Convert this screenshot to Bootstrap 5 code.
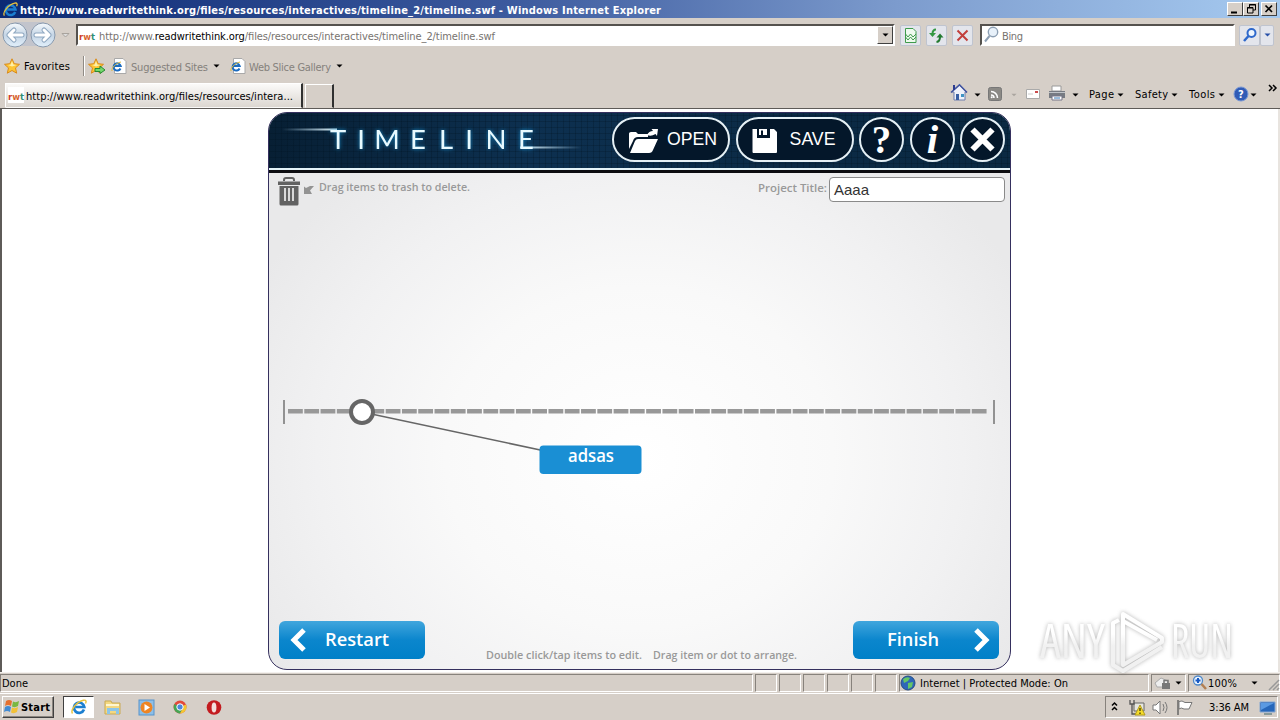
<!DOCTYPE html>
<html lang="en">

<head>
    <meta charset="UTF-8">
    <meta name="viewport" content="width=device-width, initial-scale=1.0">
    <title>Timeline</title>
    <link href="https://cdn.jsdelivr.net/npm/bootstrap@5.3.3/dist/css/bootstrap.min.css" rel="stylesheet">
    <style>
        body {
            width: 1280px;
            height: 720px;
            overflow: hidden;
            background: #d6cfc8;
            color: #000;
            font: 11px/14px "DejaVu Sans Condensed", "DejaVu Sans", sans-serif;
            font-stretch: condensed;
        }
        svg { display: block; flex: none; overflow: visible; }
        svg text { white-space: pre; }

        /* title bar */
        .titlebar {
            height: 18px;
            padding: 0 3px 0 3px;
            background: linear-gradient(90deg, #0c2a74, #3c5a9e 40%, #7c9bcd 70%, #a6caf0);
        }
        .win-btn { width: 16px; height: 14px; background: #d6cfc8; border: 1px solid; border-color: #fff #404040 #404040 #fff; }
        .win-close { margin-left: 2px; }

        /* address row */
        .address-row { height: 34px; padding-left: 2px; }
        .sunken { background: #fff; border: 2px solid; border-color: #55524e #fff #fff #55524e; outline: 0; }
        .address-box { width: 819px; height: 22px; margin-left: 6px; }
        .drop-btn { width: 16px; height: 18px; background: #d6cfc8; border: 1px solid; border-color: #fff #404040 #404040 #fff; }
        .tool-btn { width: 21px; height: 21px; background: #e3e5ec; border: 1px solid #bfc4cf; border-radius: 2px; }
        .search-box { width: 255px; height: 22px; margin-left: 7px; }

        /* favorites and tabs */
        .fav-row { height: 28px; padding-left: 4px; }
        .vline { width: 2px; height: 20px; background: #908b85; border-right: 1px solid #fff; }
        .tab-row { height: 29px; border-bottom: 1px solid #5e5b58; padding-left: 5px; }
        .tab-on { width: 298px; height: 25px; background: linear-gradient(#fbfaf9, #dcd7d1); border: 1px solid; border-color: #fff #303030 transparent #fff; border-right-width: 2px; padding-left: 2px; }
        .tab-new { width: 29px; height: 24px; margin-left: 2px; border: 1px solid; border-color: #fff #303030 transparent #fff; border-right-width: 2px; }
        .cmds { width: 329px; height: 24px; }

        /* page area */
        .page { height: 563px; background: #fff; border-left: 2px solid #5e5b58; border-right: 2px solid #e8e4df; padding-top: 3px; }
        .app {
            width: 743px;
            height: 558px;
            margin-left: 266px;
            border: 1.5px solid #35305e;
            border-radius: 19px;
            overflow: hidden;
            font-stretch: normal;
            background: radial-gradient(ellipse 430px 380px at 50% 62%, #fff 0, #f9f9f9 45%, #f1f1f2 75%, #e9e9ea 100%);
        }
        .app-head {
            height: 60px;
            background:
                repeating-linear-gradient(0deg, rgba(0, 18, 32, .25) 0 1px, transparent 1px 6px),
                repeating-linear-gradient(90deg, rgba(0, 18, 32, .25) 0 1px, transparent 1px 6px),
                linear-gradient(90deg, #071f34, #0d3050 35%, #0b2a45 70%, #0a2942);
            border-bottom: 3px solid #0c0c10;
            box-shadow: inset 0 -2px #e4f3f8;
        }
        .pill { height: 45px; border: 2px solid #e5f0f5; border-radius: 23px; background: #04172a; color: #fff; font: 17.7px "Liberation Sans", sans-serif; }
        .round { width: 45px; }
        .hint { font: 600 10.5px/14px "Open Sans", sans-serif; white-space: pre; }
        .title-input { width: 176px; height: 25px; border: 1.5px solid #8a8a8a; border-radius: 4px; background: #fff; padding: 0 4px; color: #333; font: 15px/24px "Liberation Sans", sans-serif; }
        .nav-btn { width: 146px; height: 38px; border: 0; border-radius: 6px; color: #fff; background: linear-gradient(#41a6dd, #0b86cd 50%, #0080c8); font: 600 18.5px "Open Sans", sans-serif; }

        /* status bar and taskbar */
        .status { height: 21px; border-top: 1px solid #f4f1ee; padding-top: 1px; }
        .panel { height: 18px; border: 1px solid; border-color: #87827c #fff #fff #87827c; margin-right: 2px; }
        .slot { width: 22px; }
        .taskbar { height: 27px; border-top: 1px solid #fff; padding: 2px 2px 0; }
        .start { width: 52px; height: 22px; border: 1px solid; border-color: #fff #404040 #404040 #fff; box-shadow: inset -1px -1px #8b8680; font-weight: bold; }
        .task-on { width: 31px; height: 22px; background: #fff; border: 1px solid; border-color: #404040 #fff #fff #404040; margin-left: 9px; }
        .tray { width: 173px; height: 22px; border: 1px solid; border-color: #87827c #fff #fff #87827c; }
        .anyrun { left: 1036px; top: 606px; filter: drop-shadow(0 0 2px rgba(70, 70, 70, .4)); }
    </style>
</head>

<body class="d-flex flex-column">
    <!-- shared icons -->
    <svg width="0" height="0" class="position-absolute">
        <defs>
            <linearGradient id="orb" x1="0" y1="0" x2="0" y2="1">
                <stop offset="0" stop-color="#f6fafd"/><stop offset=".5" stop-color="#c5d5e5"/><stop offset="1" stop-color="#e2f0fb"/>
            </linearGradient>
            <linearGradient id="streak1"><stop offset="0" stop-color="#bfe6ff" stop-opacity="0"/><stop offset="1" stop-color="#e8faff"/></linearGradient>
            <linearGradient id="streak2"><stop offset="0" stop-color="#e8faff"/><stop offset="1" stop-color="#bfe6ff" stop-opacity="0"/></linearGradient>
            <linearGradient id="fade" gradientUnits="userSpaceOnUse" x1="0" y1="28" x2="0" y2="40"><stop offset="0" stop-color="#fff"/><stop offset="1" stop-color="#f1f1f1"/></linearGradient>
            <symbol id="ie" viewBox="0 0 16 16">
                <path d="M13 10.6A5.2 5.2 0 1 1 13.3 8H4.5" fill="none" stroke="#1c7fd0" stroke-width="2.7"/>
                <path d="M1.5 14.5C-1 11 6 2.500 12.500 1.200C15.500.600 15.400 2.800 14.500 4.500" fill="none" stroke="#e8c23c" stroke-width="1.400"/>
            </symbol>
            <symbol id="iepage" viewBox="0 0 16 16">
                <path d="M3.500.5H12l3 3V15.500H3.500Z" fill="#fff" stroke="#a9a9a9"/>
                <path d="M9.500 10.500A3.600 3.600 0 1 1 9.700 8H3.500" fill="none" stroke="#1c6cc0" stroke-width="2"/>
                <path d="M1 13C0 10 5 5 10 4" fill="none" stroke="#dcb83a"/>
            </symbol>
            <symbol id="star" viewBox="0 0 16 16">
                <path d="M8 .8L10.200 5.700L15.500 6.300L11.500 9.900L12.700 15.200L8 12.500L3.300 15.200L4.500 9.900L.5 6.300L5.800 5.700Z" fill="#fdc533" stroke="#d98a1c"/>
                <path d="M8 3L9.300 6.600L12.500 7L8 8.500L4 7L6.700 6.500Z" fill="#fff0a8"/>
            </symbol>
            <symbol id="down" viewBox="0 0 7 4"><path d="M.5 .5H6.500L3.500 3.500Z"/></symbol>
        </defs>
    </svg>

    <div class="titlebar d-flex align-items-center text-white">
        <svg width="15" height="15"><use href="#ie"/></svg>
        <svg width="642" height="16" class="ms-1 me-auto"><text x="-2" y="12.500" fill="#fff" font-weight="bold" textLength="641" lengthAdjust="spacing">http://www.readwritethink.org/files/resources/interactives/timeline_2/timeline.swf - Windows Internet Explorer</text></svg>
        <div class="win-btn"><svg width="14" height="12"><path d="M3 9.500h6" stroke="#000" stroke-width="2"/></svg></div>
        <div class="win-btn"><svg width="14" height="12"><path d="M5.500 4V1.500H11.500V7H9M5 2h7M3.500 4.500H9V10H3.500ZM3 5h6" fill="none" stroke="#000"/></svg></div>
        <div class="win-btn win-close"><svg width="14" height="12"><path d="M3.500 2.500L10 9M10 2.500L3.500 9" stroke="#000" stroke-width="1.700"/></svg></div>
    </div>

    <div class="address-row d-flex align-items-center">
        <svg width="68" height="28">
            <path d="M13 1H42V25H13Z" fill="#c2c4cc"/>
            <g fill="url(#orb)" stroke="#8899ad"><circle cx="13" cy="14" r="12"/><circle cx="41" cy="14" r="12"/></g>
            <g fill="none" stroke-linecap="round" stroke-linejoin="round" stroke="#8ea7c0" stroke-width="5"><path d="M20 14H7M12 9L7 14L12 19"/><path d="M34 14H47M42 9L47 14L42 19"/></g>
            <g fill="none" stroke-linecap="round" stroke-linejoin="round" stroke="#fff" stroke-width="3"><path d="M20 14H7M12 9L7 14L12 19"/><path d="M34 14H47M42 9L47 14L42 19"/></g>
            <path d="M60 12.500h7l-3.500 3.500z" fill="#ddd" stroke="#a8a39d"/>
        </svg>
        <div class="address-box sunken d-flex align-items-center justify-content-between">
            <svg width="430" height="18">
                <text x="1" y="13.500" font-size="9" font-weight="bold" fill="#d03b2e" textLength="16" lengthAdjust="spacingAndGlyphs">r<tspan fill="#d8642f">w</tspan><tspan fill="#2f8e76">t</tspan></text>
                <text x="21" y="14" fill="#77736f" textLength="396" lengthAdjust="spacing">http://www.<tspan fill="#000">readwritethink.org</tspan>/files/resources/interactives/timeline_2/timeline.swf</text>
            </svg>
            <div class="drop-btn d-flex align-items-center justify-content-center"><svg width="7" height="4"><use href="#down"/></svg></div>
        </div>
        <div class="d-flex" style="gap: 5px; margin-left: 5px">
            <div class="tool-btn"><svg width="19" height="19"><path d="M4.500 2.500H12L15 5.500V16.500H4.500Z" fill="#eefaee" stroke="#3f9b4c"/><path d="M4.500 8L7 11L9.500 8L12 11L15 8M4.500 11L7 14L9.500 11L12 14L15 11" stroke="#3f9b4c" fill="none"/></svg></div>
            <div class="tool-btn"><svg width="19" height="19"><path d="M9 3.500Q5.500 3.500 5.500 8" fill="none" stroke="#349842" stroke-width="2"/><path d="M2 7H9L5.500 11Z" fill="#349842"/><path d="M9.500 16Q13 15.500 13 11" fill="none" stroke="#237a30" stroke-width="2"/><path d="M9.500 11.500H16.500L13 7.500Z" fill="#237a30"/></svg></div>
            <div class="tool-btn"><svg width="19" height="19"><path d="M4.500 4.500L14.500 14.500M14.500 4.500L4.500 14.500" stroke="#c23f3c" stroke-width="2"/></svg></div>
        </div>
        <div class="search-box sunken">
            <svg width="200" height="18"><circle cx="11" cy="6" r="4.700" fill="#e8f1fa" stroke="#8d9fb3" stroke-width="1.400"/><path d="M7.500 10L3 15.500" stroke="#8d9fb3" stroke-width="2"/><text x="20" y="14" fill="#77736f" textLength="21">Bing</text></svg>
        </div>
        <div class="tool-btn ms-1"><svg width="19" height="19"><circle cx="11.500" cy="7" r="4" fill="#edf5fe" stroke="#2e68cb" stroke-width="2"/><path d="M8.500 10L4 15" stroke="#2e68cb" stroke-width="2.500"/></svg></div>
        <div class="tool-btn d-flex align-items-center justify-content-center" style="width: 14px"><svg width="7" height="4" fill="#2850a8"><use href="#down"/></svg></div>
    </div>

    <div class="fav-row d-flex align-items-center">
        <svg width="16" height="16"><use href="#star" width="16"/></svg>
        <svg width="59" height="16"><text x="4" y="12" textLength="46">Favorites</text></svg>
        <div class="vline ms-1"></div>
        <svg width="22" height="16" class="ms-1"><use href="#star" x="-1" width="16"/><path d="M6 10.500H11V8L16 12L11 15.500V13.500H6Z" fill="#75d86c" stroke="#278a32"/></svg>
        <svg width="16" height="16"><use href="#iepage" width="16"/></svg>
        <svg width="103" height="16"><text x="4" y="13" fill="#85817c" textLength="77">Suggested Sites</text><use href="#down" x="86" y="6" width="7" height="4"/></svg>
        <svg width="16" height="16"><use href="#iepage" width="16"/></svg>
        <svg width="110" height="16"><text x="3" y="13" fill="#85817c" textLength="82">Web Slice Gallery</text><use href="#down" x="90" y="6" width="7" height="4"/></svg>
    </div>

    <div class="tab-row d-flex align-items-end">
        <div class="tab-on d-flex align-items-center">
            <svg width="292" height="17"><path d="M0 0h16v16H0z" fill="#fff"/>
                <text x="0" y="13" font-size="9" font-weight="bold" fill="#d03b2e" textLength="16" lengthAdjust="spacingAndGlyphs">r<tspan fill="#d8642f">w</tspan><tspan fill="#2f8e76">t</tspan></text>
                <text x="18" y="13" textLength="267" lengthAdjust="spacing">http://www.readwritethink.org/files/resources/intera...</text></svg>
        </div>
        <div class="tab-new me-auto"></div>
        <svg class="cmds">
            <path d="M1 8L8 1L16 8H14V16H3V8Z" fill="#eef1fa" stroke="#6f7fae"/><path d="M0 8.500L8.500 .8L16 8.500" fill="none" stroke="#4154a0" stroke-width="1.600"/><path d="M3 1v5" stroke="#2c3c90" stroke-width="2"/><path d="M5 10h3v6H5z" fill="#385fa3"/><path d="M10 10h3v3h-3z" fill="#3f94c4"/>
            <g transform="translate(0 1)">
            <use href="#down" x="23" y="8" width="7" height="4"/>
            <rect x="37.500" y="2.500" width="13" height="13" rx="2" fill="#8b8985" stroke="#777"/><path d="M40 6.500A6.500 6.500 0 0 1 46.500 13M40 10A3 3 0 0 1 43 13" fill="none" stroke="#fff" stroke-width="1.500"/><circle cx="40.700" cy="12.300" r="1" fill="#fff"/>
            <use href="#down" x="60" y="8" width="6" height="4" fill="#aaa59f"/>
            <path d="M75.500 4.500h13v9h-13z" fill="#fff" stroke="#aaa"/><path d="M84 6h3v2h-3z" fill="#cc4c4c"/><path d="M77 9h5" stroke="#ccc"/>
            <path d="M101 1h9v5h-9z" fill="#fff" stroke="#999"/><path d="M98 6h16v7H98z" fill="#777b82"/><path d="M98 7.500h16" stroke="#c0c4c8"/><path d="M101 11h10v4h-10z" fill="#fff" stroke="#778"/><path d="M103 13h6" stroke="#3778b5"/>
            <use href="#down" x="121" y="8" width="7" height="4"/>
            <text x="138" y="13" textLength="25">Page</text><use href="#down" x="166" y="8" width="7" height="4"/>
            <text x="184" y="13" textLength="33">Safety</text><use href="#down" x="220" y="8" width="7" height="4"/>
            <text x="238" y="13" textLength="26">Tools</text><use href="#down" x="267" y="8" width="7" height="4"/>
            <circle cx="290" cy="9" r="7" fill="#315cb6" stroke="#7998d5"/><text x="287" y="13" font-weight="bold" fill="#fff">?</text>
            <use href="#down" x="299" y="8" width="7" height="4"/>
            <path d="M318 0L321 3L318 6M322 0L325 3L322 6" fill="none" stroke="#000" stroke-width="1.500"/>
            </g>
        </svg>
    </div>

    <main class="page">
        <div class="app d-flex flex-column">
            <div class="app-head d-flex flex-none">
                <svg width="343" height="54">
                    <path d="M13 15.500H68V17.500H13Z" fill="url(#streak1)"/>
                    <path d="M251 33.500H313V35.500H251Z" fill="url(#streak2)"/>
                    <g font-family="Lato, sans-serif" font-size="27.500" text-anchor="middle" fill="#e8faff" style="filter: drop-shadow(0 0 2px #1689c7)"><text x="69 92 118 149 177 200 227 257" y="36">TIMELINE</text></g>
                </svg>
                <div class="d-flex pt-1" style="gap: 5.600px">
                    <button class="pill d-flex align-items-center p-0" style="width: 118px; gap: 7px"><svg width="46" height="38"><path d="M15 28V12.500Q15 11 17 11H22L24 13H34V16H24Q20 16 19 20Z" fill="#fff"/><path d="M16 32L21 20Q22 18 24 18H44L39 29Q38 32 35 32Z" fill="#fff"/><path d="M33 14Q35 10 39 10L37.500 8L44 8L43 15L41.500 13Q37 16 33 14Z" fill="#fff"/></svg><span>OPEN</span></button>
                    <button class="pill d-flex align-items-center p-0" style="width: 118px; gap: 13px"><svg width="39" height="38"><path d="M14.500 8H19V17H32V8H36L39 11V31Q39 32 38 32H15.500Q14.500 32 14.500 31ZM21 8H29V14H25V9.500H23V14H21Z" fill="#fff"/></svg><span>SAVE</span></button>
                    <button class="pill round p-0"><svg width="41" height="41"><text x="20.500" y="33.500" text-anchor="middle" font-family="Liberation Serif, serif" font-weight="bold" font-size="39" fill="#fff">?</text></svg></button>
                    <button class="pill round p-0"><svg width="41" height="41"><text x="20.500" y="33.500" text-anchor="middle" font-family="Liberation Serif, serif" font-weight="bold" font-style="italic" font-size="41" fill="#fff">i</text></svg></button>
                    <button class="pill round p-0"><svg width="41" height="41"><path d="M10.500 10.500L30.500 30.500M30.500 10.500L10.500 30.500" stroke="#fff" stroke-width="6"/></svg></button>
                </div>
            </div>

            <div class="d-flex align-items-start" style="padding: 3.500px 5px 0 8px">
                <svg width="42" height="32"><path d="M7 4V3Q7 1 9 1H15Q17 1 17 3V4" fill="none" stroke="#626262" stroke-width="2"/><path d="M1 4.500H23V8H1ZM2.500 9H21.500V27Q21.500 28.500 20 28.500H4Q2.500 28.500 2.500 27Z" fill="#626262"/><path d="M8 11V24M12 11V24M16 11V24" stroke="#eee" stroke-width="1.700"/><path d="M27 17V9.500L29 11L33 9H37L33 13.500L35 17Z" fill="#939393"/></svg>
                <svg width="160" height="20" class="hint me-auto"><text x="0" y="14" fill="#999" textLength="151" lengthAdjust="spacingAndGlyphs">Drag items to trash to delete.</text></svg>
                <svg width="71" height="20" class="hint"><text x="0" y="15" fill="#999" textLength="69" lengthAdjust="spacingAndGlyphs">Project Title:</text></svg>
                <div class="title-input">Aaaa</div>
            </div>

            <svg width="740" height="394" class="my-auto" viewBox="269 218 740 394">
                <path d="M284 400V424M994 400V424" stroke="#929292" stroke-width="2"/>
                <path d="M288 411.300H987.500" stroke="#989898" stroke-width="4.500" stroke-dasharray="14.800 1.480"/>
                <path d="M362 412L545 451" stroke="#666" stroke-width="1.500"/>
                <circle cx="362" cy="412" r="11" fill="#fff" stroke="#666" stroke-width="4"/>
                <rect x="539.500" y="445.500" width="102" height="28.500" rx="4" fill="#1a8fd4"/>
                <text x="568" y="462" fill="#fff" font-family="Open Sans, sans-serif" font-weight="600" font-size="17.500" textLength="46" lengthAdjust="spacingAndGlyphs">adsas</text>
            </svg>

            <div class="d-flex align-items-start justify-content-between" style="padding: 0 11px 10px 10px">
                <button class="nav-btn d-flex align-items-center p-0"><svg width="146" height="38"><path d="M25 9L15 19L25 29" fill="none" stroke="#fff" stroke-width="5"/><text x="46" y="24.500" fill="#fff" textLength="64" lengthAdjust="spacingAndGlyphs">Restart</text></svg></button>
                <svg width="309" height="38" class="hint"><text x="1" y="38" fill="#999" textLength="156" lengthAdjust="spacingAndGlyphs">Double click/tap items to edit.</text><text x="168" y="38" fill="#999" textLength="144" lengthAdjust="spacingAndGlyphs">Drag item or dot to arrange.</text></svg>
                <button class="nav-btn d-flex align-items-center p-0"><svg width="146" height="38"><path d="M123 9L133 19L123 29" fill="none" stroke="#fff" stroke-width="5"/><text x="34" y="24.500" fill="#fff" textLength="52" lengthAdjust="spacingAndGlyphs">Finish</text></svg></button>
            </div>
        </div>
    </main>

    <!-- watermark floats above the page -->
    <svg class="anyrun position-absolute" width="204" height="68">
        <g fill="url(#fade)" font-family="Open Sans, sans-serif" font-size="48"><text x="4" y="52" textLength="65" lengthAdjust="spacingAndGlyphs">ANY</text><text x="135" y="52" textLength="62" lengthAdjust="spacingAndGlyphs">RUN</text></g>
        <path d="M87 8L126 32V36L87 59ZM87 15L121 34M83 14L77 17V59L87 65L126 41" fill="none" stroke="url(#fade)" stroke-width="4" stroke-linejoin="round"/>
    </svg>

    <footer class="status d-flex">
        <div class="panel" style="width: 753px"><svg width="60" height="16"><text x="1" y="12" textLength="26">Done</text></svg></div>
        <div class="panel slot"></div>
        <div class="panel slot"></div>
        <div class="panel slot"></div>
        <div class="panel slot"></div>
        <div class="panel slot"></div>
        <div class="panel slot"></div>
        <div class="panel" style="width: 250px"><svg width="200" height="16"><circle cx="8" cy="8" r="7" fill="#2e67b9" stroke="#254c83"/><path d="M3 4Q7 1 10 3L8 6L4 8ZM8 8L13 7L12 12L8 14Z" fill="#65c666"/><text x="20" y="12" textLength="148">Internet | Protected Mode: On</text></svg></div>
        <div class="panel" style="width: 35px"><svg width="32" height="16"><path d="M3 8L9 3L16 6L14 12H5Z" fill="#eee" stroke="#aaa"/><path d="M10 8h8v6h-8z" fill="#777"/><path d="M12 8V5.500h4V8" fill="none" stroke="#777" stroke-width="1.500"/><use href="#down" x="23" y="6" width="7" height="4"/></svg></div>
        <div class="panel flex-grow-1 me-0"><svg width="90" height="16"><circle cx="9" cy="5.500" r="4.500" fill="#e8f3ff" stroke="#4f88c8" stroke-width="1.300"/><path d="M9 3V8M6.500 5.500H11.500" stroke="#1759c3" stroke-width="2"/><path d="M12.500 9L17 14" stroke="#b27f53" stroke-width="2.500"/><text x="19" y="12" textLength="29">100%</text><use href="#down" x="62" y="6" width="7" height="4"/><path d="M80 15L90 5M84 15L90 9M88 15L90 13" stroke="#999" stroke-width="1.500"/></svg></div>
    </footer>

    <div class="taskbar d-flex">
        <div class="start"><svg width="50" height="20"><path d="M3 4Q6 2 9 4L8 9Q5 7 2 9Z" fill="#e5702f"/><path d="M10 4.500Q13 6 16 4L15 9Q12 11 9 9.500Z" fill="#79b842"/><path d="M2 10Q5 8 8 10L7 15Q4 13 1 15Z" fill="#428bd3"/><path d="M9 10.500Q12 12 15 10L14 15Q11 17 8 15.500Z" fill="#f2c137"/><text x="18" y="14" textLength="29">Start</text></svg></div>
        <div class="task-on d-flex align-items-center justify-content-center"><svg width="16" height="16"><use href="#ie"/></svg></div>
        <svg width="150" height="22" class="me-auto">
            <path d="M11 5h6l1 2h8v11H11z" fill="#f3d881" stroke="#c9a953"/><path d="M13 12h12v6h-3v-3h-6v3h-3z" fill="#8cc5e8"/><path d="M12 9h13" stroke="#fff6cf" stroke-width="2"/>
            <rect x="45" y="4" width="15" height="15" fill="#8dbfe8" stroke="#5694cb"/><circle cx="52.500" cy="11.500" r="6" fill="#ee8524"/><path d="M50.500 8L56 11.500L50.500 15Z" fill="#fff"/>
            <circle cx="86" cy="11" r="6.500" fill="#e34a3b"/><path d="M86 11L80.400 8A6.500 6.500 0 0 0 86 17.500L89 12Z" fill="#46a554"/><path d="M86 11L92 8.500A6.500 6.500 0 0 1 86 17.500L89 12Z" fill="#f4c732"/><circle cx="86" cy="11" r="3.200" fill="#4c87dc" stroke="#fff"/>
            <circle cx="120" cy="11.500" r="7.300" fill="#c31b1f"/><ellipse cx="120" cy="11.500" rx="2.400" ry="5" fill="#f3dfdc"/>
        </svg>
        <div class="tray"><svg width="171" height="20">
            <path d="M6 8.500L8.500 6L11 8.500M6 13L8.500 10.500L11 13" fill="none" stroke="#000" stroke-width="1.500"/>
            <path d="M28 6h10v8h-10z" fill="#e6e6e0" stroke="#666"/><path d="M24 3v4h4V3M26 7v10h6" fill="none" stroke="#555" stroke-width="1.300"/><path d="M34 8L39 18H29Z" fill="#f6dc29" stroke="#b09a1d"/><path d="M34 11V14M34 15.500V17" stroke="#000"/>
            <path d="M47 8h3l4-4v13l-4-4h-3z" fill="#fff" stroke="#777"/><path d="M57 7Q59 10.500 57 14M59 5Q63 10.500 59 16" fill="none" stroke="#777"/>
            <path d="M72 3V18" stroke="#666" stroke-width="1.500"/><path d="M73 4.500Q76 3 79 5.500H86L83 12H78Q75 10 73 12Z" fill="#fff" stroke="#777"/>
            <text x="103" y="14" textLength="40">3:36 AM</text>
            <path d="M154 5h15v10h-15z" fill="#2767ba" stroke="#84a6d1"/><path d="M155 6h13L155 13z" fill="#5b9ae2"/><path d="M158 17h8" stroke="#899" stroke-width="2"/>
        </svg></div>
    </div>

    <script src="https://cdn.jsdelivr.net/npm/bootstrap@5.3.3/dist/js/bootstrap.bundle.min.js"></script>
</body>

</html>
